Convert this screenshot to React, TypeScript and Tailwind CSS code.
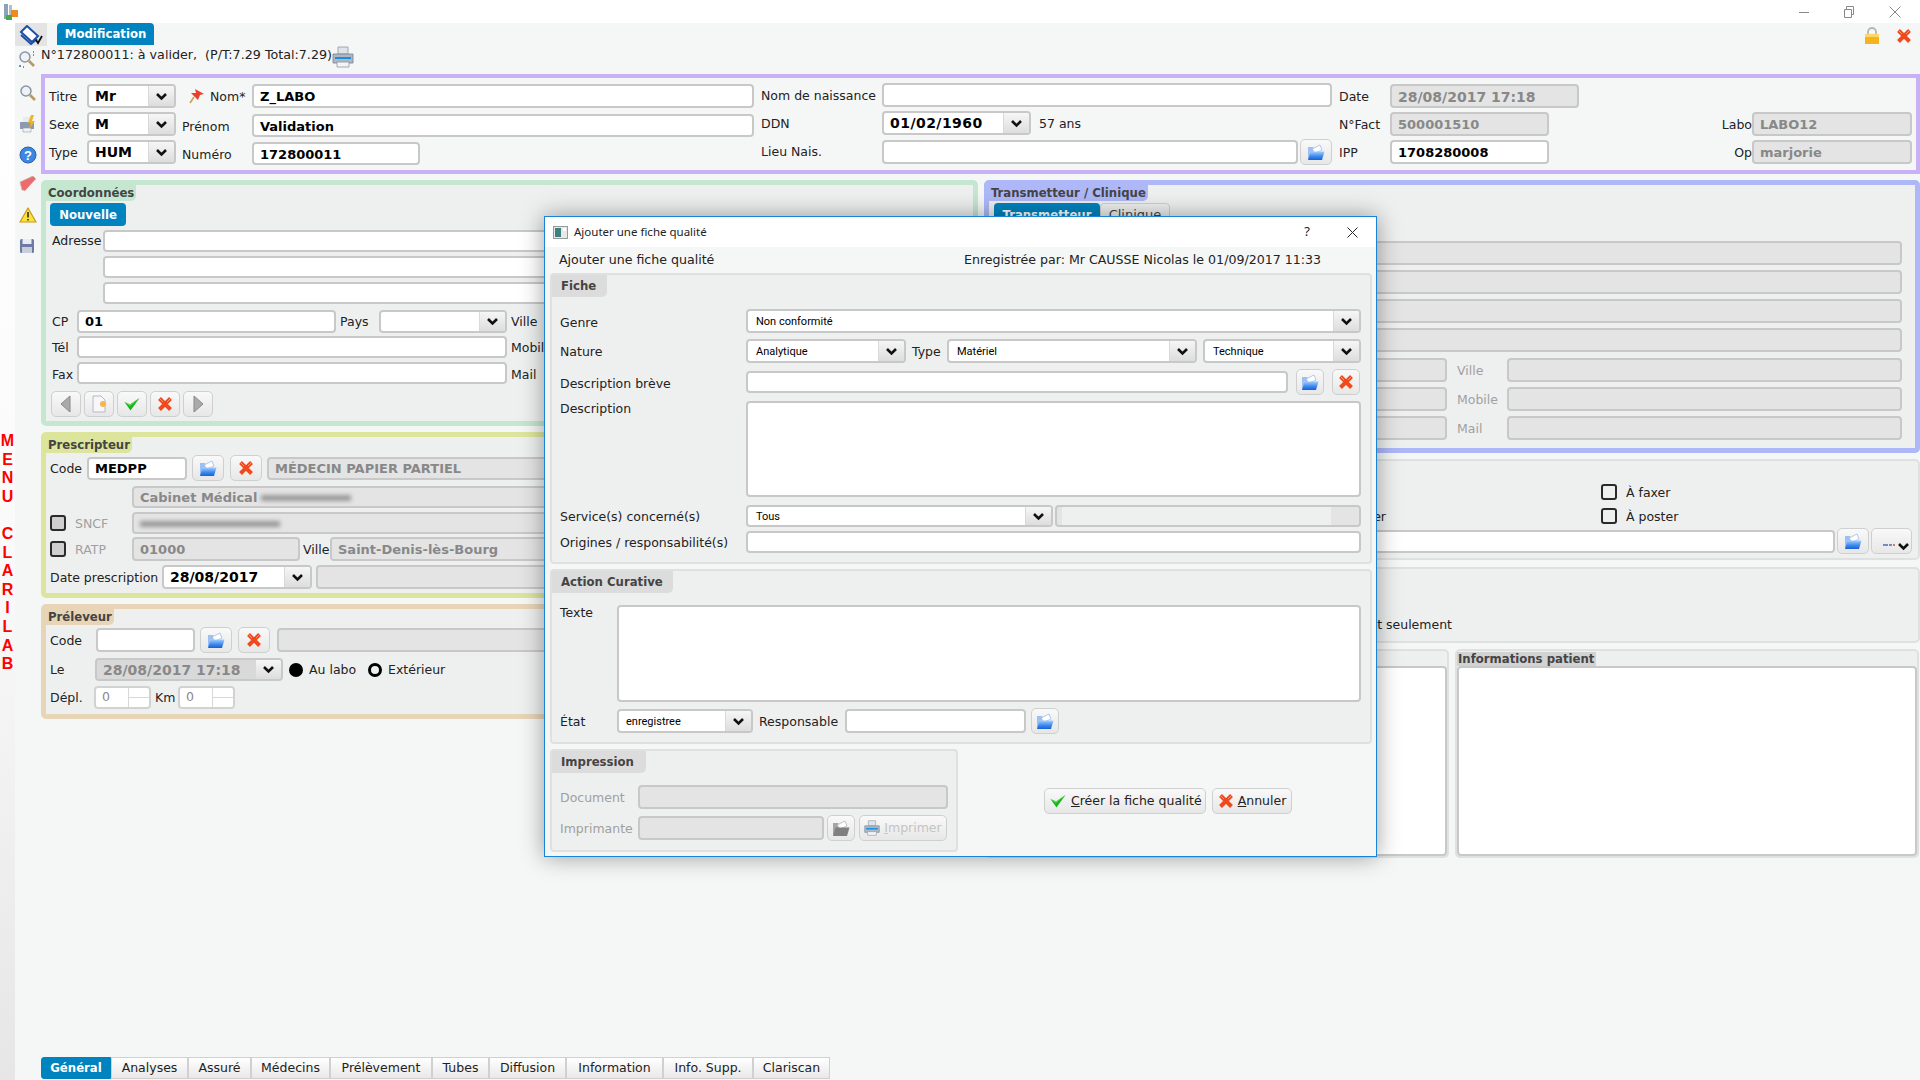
import type { ReactNode } from "react";

const SANS = "font-['DejaVu_Sans',sans-serif]";
const BOLD = "font-['DejaVu_Sans_Condensed','DejaVu_Sans',sans-serif] font-bold";
const COMBO = "font-['Roboto',sans-serif] text-[11px] font-normal";

const TABS = [
  { label: "Général", w: "w-[70px]", active: true },
  { label: "Analyses", w: "w-[77px]" },
  { label: "Assuré", w: "w-[63px]" },
  { label: "Médecins", w: "w-[79px]" },
  { label: "Prélèvement", w: "w-[102px]" },
  { label: "Tubes", w: "w-[57px]" },
  { label: "Diffusion", w: "w-[77px]" },
  { label: "Information", w: "w-[97px]" },
  { label: "Info. Supp.", w: "w-[90px]" },
  { label: "Clariscan", w: "w-[77px]" },
];

function Chevron() {
  return (
    <svg width="13" height="9" viewBox="0 0 13 9">
      <path d="M2 2 L6.5 6.5 L11 2" fill="none" stroke="#111" strokeWidth="2.6" />
    </svg>
  );
}

function FolderIcon({ muted }: { muted?: boolean }) {
  return (
    <svg width="18" height="17" viewBox="0 0 18 17">
      <defs>
        <linearGradient id="folderFront" x1="0" y1="0" x2="0" y2="1">
          <stop offset="0" stopColor="#a6cdfb" />
          <stop offset="0.55" stopColor="#3d8cf0" />
          <stop offset="1" stopColor="#1a5fd6" />
        </linearGradient>
      </defs>
      <path d="M1 3 H6 L7 5 H10 V15 H1 Z" fill={muted ? "#a5a5a5" : "#9cc0f2"} />
      <path d="M5 5 L13 1 L15 6 L8 9 Z" fill="#fff" stroke={muted ? "#aaa" : "#8fb3ea"} strokeWidth="0.7" />
      <path d="M3.5 7.5 H17.5 L15 16 H1 Z" fill={muted ? "#808080" : "url(#folderFront)"} />
    </svg>
  );
}

function RedX({ size = 16 }: { size?: number }) {
  return (
    <svg width={size} height={size} viewBox="0 0 16 16">
      <path d="M2.5 2.5 L13.5 13.5 M13.5 2.5 L2.5 13.5" stroke="#f0491e" strokeWidth="4" />
      <path d="M2 2 L6 6 M14 2 L10 6" stroke="#ff9a78" strokeWidth="1" />
    </svg>
  );
}

function GreenCheck({ size = 16 }: { size?: number }) {
  return (
    <svg width={size} height={size} viewBox="0 0 16 16">
      <path d="M0.5 6 L6 8.5 L15.5 2 L6.5 14.5 Z" fill="#17b61d" />
      <path d="M0.5 6 L6 8.5 L15.5 2 L6 10 Z" fill="#5fe04c" />
    </svg>
  );
}

function PrinterIcon({ w = 22, h = 22 }: { w?: number; h?: number }) {
  return (
    <svg width={w} height={h} viewBox="0 0 22 22">
      <path d="M6 1 H16 V8 H6 Z" fill="#dfe4ea" stroke="#8b97a5" strokeWidth="0.8" />
      <path d="M1 8 H21 V17 H1 Z" fill="#aeb7c2" stroke="#78828e" strokeWidth="0.8" />
      <path d="M3 11 H19 V13 H3 Z" fill="#1c8ee0" />
      <path d="M5 16 H17 V21 H5 Z" fill="#f4f4f4" stroke="#8b97a5" strokeWidth="0.8" />
    </svg>
  );
}

function MagnifierIcon({ dots }: { dots?: boolean }) {
  return (
    <svg width="18" height="18" viewBox="0 0 18 18">
      <circle cx="7" cy="7" r="5" fill="#eef2f6" stroke="#8b95a3" strokeWidth="1.5" />
      <path d="M11 11 L16 16" stroke="#b59a62" strokeWidth="2.6" />
      {dots && <path d="M1 16 H3 M5 17 H6 M15 2 H16 M15 5 H16" stroke="#3c6bb0" strokeWidth="1.4" />}
    </svg>
  );
}

function SideIcon({ kind }: { kind: string }) {
  if (kind === "search") return <MagnifierIcon />;
  if (kind === "print")
    return (
      <svg width="18" height="18" viewBox="0 0 18 18">
        <path d="M1 7 H15 V14 H1 Z" fill="#8b9ab0" />
        <path d="M4 2 H11 V7 H4 Z" fill="#e8ecf0" />
        <path d="M4 13 H12 V17 H4 Z" fill="#f2f2f2" stroke="#8b9ab0" strokeWidth="0.6" />
        <path d="M12 0 L9 8 H12 L10 14 L16 6 H13 L15 0 Z" fill="#f0b321" />
      </svg>
    );
  if (kind === "help")
    return (
      <svg width="18" height="18" viewBox="0 0 18 18">
        <circle cx="9" cy="9" r="8" fill="#3d87e2" stroke="#2a5fae" strokeWidth="1" />
        <text x="9" y="13.5" textAnchor="middle" fontSize="13" fontWeight="700" fill="#fff" fontFamily="'Liberation Sans', sans-serif">?</text>
      </svg>
    );
  if (kind === "book")
    return (
      <svg width="18" height="16" viewBox="0 0 18 16">
        <path d="M1 6 L14 0 L17 3 L6 15 L3 14 Z" fill="#ef6a6a" stroke="#c9b4b4" strokeWidth="0.8" />
        <path d="M3 14 L6 15 L17 3 L16.5 6 L6 16 Z" fill="#f6f0f0" />
      </svg>
    );
  if (kind === "warning")
    return (
      <svg width="18" height="16" viewBox="0 0 18 16">
        <path d="M9 1 L17 15 H1 Z" fill="#ffe13b" stroke="#c79a16" strokeWidth="1.2" strokeLinejoin="round" />
        <path d="M9 5 V10.5 M9 12 V13.5" stroke="#222" strokeWidth="1.5" />
      </svg>
    );
  return (
    <svg width="16" height="16" viewBox="0 0 16 16">
      <rect x="1" y="1" width="14" height="14" rx="1.5" fill="#6d7aa3" />
      <rect x="3.5" y="1" width="9" height="5" fill="#e9ecf4" />
      <rect x="3" y="9" width="10" height="6" fill="#c8cede" />
    </svg>
  );
}

function Field({ className, value, disabled, children }: { className?: string; value?: string; disabled?: boolean; children?: ReactNode }) {
  return (
    <div
      className={`flex items-center overflow-hidden whitespace-nowrap rounded-[4px] border-2 border-[#c8c8c8] pl-[6px] pt-[2px] text-[13px] font-bold ${
        disabled ? "bg-[#e4e4e4] text-[#888]" : "bg-white text-black"
      } ${className ?? ""}`}
    >
      {value}
      {children}
    </div>
  );
}

function Select({ className, value, combo, disabled, valueClass }: { className?: string; value?: string; combo?: boolean; disabled?: boolean; valueClass?: string }) {
  return (
    <div className={`flex overflow-hidden rounded-[4px] border-2 border-[#c8c8c8] text-black ${disabled ? "bg-[#d9d9d9]" : "bg-white"} ${className ?? ""}`}>
      <div className={`flex flex-1 items-center whitespace-nowrap ${combo ? `pl-[8px] pt-[3px] ${COMBO}` : "pl-[6px] pt-[1px] text-[14px] font-bold"} ${disabled ? "text-[#888]" : ""} ${valueClass ?? ""}`}>{value}</div>
      <div className="flex w-[26px] items-center justify-center border-l border-[#d9d9d9] bg-gradient-to-b from-[#f6f6f6] to-[#dddddd]">
        <Chevron />
      </div>
    </div>
  );
}

function IconButton({ className, children }: { className?: string; children: ReactNode }) {
  return (
    <div className={`flex h-[26px] shrink-0 items-center justify-center rounded-[5px] border border-[#cfcfcf] bg-gradient-to-b from-[#f9f9f9] to-[#e7e7e7] ${className ?? ""}`}>
      {children}
    </div>
  );
}

function Label({ className, children, muted }: { className?: string; children: ReactNode; muted?: boolean }) {
  return <div className={`shrink-0 whitespace-nowrap pt-[2px] text-[12.5px] ${muted ? "text-[#a0a0a0]" : "text-[#222]"} ${className ?? ""}`}>{children}</div>;
}

function Checkbox({ disabled }: { disabled?: boolean }) {
  return <div className={`h-[16px] w-[16px] shrink-0 rounded-[3px] border-2 border-[#2a2a2a] ${disabled ? "bg-[#cfcfcf]" : ""}`} />;
}

function Spin({ className }: { className?: string }) {
  return (
    <div className={`flex h-[23px] overflow-hidden rounded-[4px] border-2 border-[#d2d2d2] bg-white text-[12.5px] text-[#888] ${className ?? ""}`}>
      <div className="flex flex-1 items-center pl-[6px]">0</div>
      <div className="flex w-[21px] flex-col border-l border-[#d8d8d8]">
        <div className="h-1/2 border-b border-[#d8d8d8]" />
      </div>
    </div>
  );
}

function Legend({ className, children }: { className?: string; children: ReactNode }) {
  return <div className={`w-fit whitespace-nowrap rounded-br-[5px] px-[2px] text-[13px] leading-[16px] text-[#444] ${BOLD} ${className ?? ""}`}>{children}</div>;
}

function BlurBar({ className }: { className?: string }) {
  return <div className={`h-[6px] bg-[#999] blur-[2px] ${className ?? ""}`} />;
}

function ModalLegend({ className, children }: { className?: string; children: ReactNode }) {
  return <div className={`flex h-[22px] items-center whitespace-nowrap rounded-br-[5px] bg-[#dcdcdc] pl-[9px] text-[13px] text-[#444] ${BOLD} ${className ?? ""}`}>{children}</div>;
}

function PurplePanel() {
  return (
    <div className="flex h-[100px] shrink-0 border-4 border-[#c9b1f8] pl-[4px]">
      <div className="flex w-[705px] flex-col pt-[6px]">
        <div className="flex h-[28px] items-start">
          <Label className="h-[24px] w-[38px] leading-[22px]">Titre</Label>
          <Select className="h-[24px] w-[89px]" value="Mr" />
          <div className="ml-[13px] flex h-[24px] w-[21px] items-center">
            <svg width="16" height="16" viewBox="0 0 16 16">
              <path d="M6 1 L15 6 L11 7 L9 12 L2 5 L7 5 Z" fill="#e8402c" />
              <path d="M5 9 L1 15" stroke="#d0a050" strokeWidth="1.6" />
            </svg>
          </div>
          <Label className="h-[24px] w-[42px] leading-[22px]">Nom*</Label>
          <Field className="h-[24px] flex-1" value="Z_LABO" />
        </div>
        <div className="flex h-[28px] items-start">
          <Label className="h-[24px] w-[38px] leading-[22px]">Sexe</Label>
          <Select className="h-[24px] w-[89px]" value="M" />
          <Label className="ml-[6px] mt-[2px] w-[70px] leading-[22px]">Prénom</Label>
          <Field className="mt-[2px] h-[23px] flex-1" value="Validation" />
        </div>
        <div className="flex h-[28px] items-start">
          <Label className="h-[24px] w-[38px] leading-[22px]">Type</Label>
          <Select className="h-[24px] w-[89px]" value="HUM" />
          <Label className="ml-[6px] mt-[2px] w-[70px] leading-[22px]">Numéro</Label>
          <Field className="mt-[2px] h-[23px] w-[168px]" value="172800011" />
        </div>
      </div>
      <div className="ml-[7px] flex w-[571px] flex-col pt-[5px]">
        <div className="flex h-[28px] items-start">
          <Label className="h-[24px] w-[121px] leading-[22px]">Nom de naissance</Label>
          <Field className="h-[24px] flex-1" />
        </div>
        <div className="flex h-[28px] items-start">
          <Label className="h-[24px] w-[121px] leading-[22px]">DDN</Label>
          <Select className="h-[24px] w-[149px]" value="01/02/1960" valueClass="tracking-[0.45px]" />
          <Label className="ml-[8px] h-[24px] leading-[22px]">57 ans</Label>
        </div>
        <div className="flex h-[28px] items-start">
          <Label className="h-[24px] w-[121px] leading-[22px]">Lieu Nais.</Label>
          <Field className="mt-[1px] h-[24px] w-[416px]" />
          <IconButton className="ml-[2px] w-[32px]">
            <FolderIcon />
          </IconButton>
        </div>
      </div>
      <div className="ml-[7px] flex w-[573px] flex-col pt-[6px]">
        <div className="flex h-[28px] items-start">
          <Label className="h-[24px] w-[51px] leading-[22px]">Date</Label>
          <Field className="h-[24px] w-[189px] text-[14px]" disabled value="28/08/2017 17:18" />
        </div>
        <div className="flex h-[28px] items-start">
          <Label className="h-[24px] w-[51px] leading-[22px]">N°Fact</Label>
          <Field className="h-[24px] w-[159px]" disabled value="500001510" />
          <Label className="h-[24px] w-[203px] text-right leading-[22px]">Labo</Label>
          <Field className="h-[24px] w-[160px]" disabled value="LABO12" />
        </div>
        <div className="flex h-[28px] items-start">
          <Label className="h-[24px] w-[51px] leading-[22px]">IPP</Label>
          <Field className="h-[24px] w-[159px]" value="1708280008" />
          <Label className="h-[24px] w-[203px] text-right leading-[22px]">Op</Label>
          <Field className="h-[24px] w-[160px]" disabled value="marjorie" />
        </div>
      </div>
    </div>
  );
}

function Coordonnees() {
  return (
    <div className="h-[246px] shrink-0 rounded-[5px] border-[5px] border-[#c5e6cf] bg-[#eef0f0]">
      <Legend className="bg-[#c5e6cf]">Coordonnées</Legend>
      <div className={`ml-[4px] mt-[2px] flex h-[23px] w-[76px] items-center justify-center rounded-[4px] bg-[#0083bf] text-[13px] text-white ${BOLD}`}>Nouvelle</div>
      <div className="ml-[6px] mr-[5px] mt-[4px] flex flex-col">
        <div className="flex h-[22px] items-start">
          <Label className="w-[51px] leading-[18px]">Adresse</Label>
          <Field className="h-[22px] flex-1" />
        </div>
        <Field className="ml-[51px] mt-[4px] h-[22px]" />
        <Field className="ml-[51px] mt-[4px] h-[22px]" />
        <div className="ml-0 mt-[6px] flex h-[23px] items-center">
          <Label className="w-[25px]">CP</Label>
          <Field className="h-[23px] w-[259px] !pt-[0px]" value="01" />
          <Label className="ml-[4px] w-[39px]">Pays</Label>
          <Select className="h-[23px] w-[128px]" />
          <Label className="ml-[4px] w-[58px]">Ville</Label>
          <Field className="h-[23px] flex-1" />
        </div>
        <div className="mt-[3px] flex h-[22px] items-center">
          <Label className="w-[25px]">Tél</Label>
          <Field className="h-[22px] w-[430px]" />
          <Label className="ml-[4px] w-[58px]">Mobile</Label>
          <Field className="h-[22px] flex-1" />
        </div>
        <div className="mt-[4px] flex h-[22px] items-center">
          <Label className="w-[25px] !pt-[4px]">Fax</Label>
          <Field className="h-[22px] w-[430px]" />
          <Label className="ml-[4px] w-[58px] !pt-[4px]">Mail</Label>
          <Field className="h-[22px] flex-1" />
        </div>
        <div className="-ml-[1px] mt-[7px] flex gap-[3px]">
          <IconButton className="w-[30px]">
            <svg width="12" height="18" viewBox="0 0 12 18">
              <path d="M10 1 V17 L1 9 Z" fill="#aaa" stroke="#888" strokeWidth="1" />
            </svg>
          </IconButton>
          <IconButton className="w-[30px]">
            <svg width="15" height="18" viewBox="0 0 15 18">
              <path d="M1 1 H9 L13 5 V17 H1 Z" fill="#f6f6fb" stroke="#b8b8c8" strokeWidth="1" />
              <circle cx="11" cy="9" r="3" fill="#f4b84a" />
            </svg>
          </IconButton>
          <IconButton className="w-[30px]">
            <GreenCheck />
          </IconButton>
          <IconButton className="w-[30px]">
            <RedX />
          </IconButton>
          <IconButton className="w-[30px]">
            <svg width="12" height="18" viewBox="0 0 12 18">
              <path d="M2 1 V17 L11 9 Z" fill="#aaa" stroke="#888" strokeWidth="1" />
            </svg>
          </IconButton>
        </div>
      </div>
    </div>
  );
}

function Prescripteur() {
  return (
    <div className="mt-[6px] h-[166px] shrink-0 rounded-[5px] border-[5px] border-[#dde59c] bg-[#eef0f0]">
      <Legend className="bg-[#dde59c]">Prescripteur</Legend>
      <div className="ml-[4px] mr-[5px] mt-[2px] flex flex-col">
        <div className="flex h-[26px] items-center">
          <Label className="w-[37px]">Code</Label>
          <Field className="h-[23px] w-[100px]" value="MEDPP" />
          <IconButton className="ml-[5px] w-[32px]">
            <FolderIcon />
          </IconButton>
          <IconButton className="ml-[6px] w-[32px]">
            <RedX />
          </IconButton>
          <Field className="ml-[5px] h-[23px] flex-1" disabled value="MÉDECIN PAPIER PARTIEL" />
        </div>
        <div className="ml-[82px] mt-[5px]">
          <Field className="h-[22px]" disabled value="Cabinet Médical">
            <BlurBar className="ml-[4px] w-[90px]" />
          </Field>
        </div>
        <div className="mt-[4px] flex h-[22px] items-center">
          <Checkbox disabled />
          <Label className="ml-[9px] w-[57px]" muted>SNCF</Label>
          <Field className="h-[22px] flex-1" disabled>
            <BlurBar className="w-[140px]" />
          </Field>
        </div>
        <div className="mt-[3px] flex h-[24px] items-center">
          <Checkbox disabled />
          <Label className="ml-[9px] w-[57px]" muted>RATP</Label>
          <Field className="h-[24px] w-[168px]" disabled value="01000" />
          <Label className="ml-[3px] w-[27px]">Ville</Label>
          <Field className="h-[24px] flex-1" disabled value="Saint-Denis-lès-Bourg" />
        </div>
        <div className="mt-[4px] flex h-[24px] items-center">
          <Label className="w-[112px]">Date prescription</Label>
          <Select className="h-[24px] w-[150px]" value="28/08/2017" />
          <Field className="ml-[4px] h-[24px] flex-1" disabled />
        </div>
      </div>
    </div>
  );
}

function Preleveur() {
  return (
    <div className="mt-[6px] h-[115px] shrink-0 rounded-[5px] border-[5px] border-[#e8d5b7] bg-[#eef0f0]">
      <Legend className="bg-[#e8d5b7]">Préleveur</Legend>
      <div className="ml-[4px] mr-[5px] mt-[2px] flex flex-col">
        <div className="flex h-[26px] items-center">
          <Label className="w-[46px]">Code</Label>
          <Field className="h-[24px] w-[99px]" />
          <IconButton className="ml-[5px] w-[32px]">
            <FolderIcon />
          </IconButton>
          <IconButton className="ml-[6px] w-[32px]">
            <RedX />
          </IconButton>
          <Field className="ml-[7px] h-[24px] flex-1" disabled />
        </div>
        <div className="mt-[5px] flex h-[23px] items-center">
          <Label className="w-[45px]">Le</Label>
          <Select className="h-[23px] w-[188px]" disabled value="28/08/2017 17:18" />
          <div className="ml-[6px] h-[14px] w-[14px] rounded-full bg-black" />
          <Label className="ml-[6px] w-[59px]">Au labo</Label>
          <div className="h-[14px] w-[14px] rounded-full border-[3px] border-black" />
          <Label className="ml-[6px]">Extérieur</Label>
        </div>
        <div className="mt-[5px] flex h-[23px] items-center">
          <Label className="w-[44px]">Dépl.</Label>
          <Spin className="w-[57px]" />
          <Label className="ml-[4px] w-[23px]">Km</Label>
          <Spin className="w-[57px]" />
        </div>
      </div>
    </div>
  );
}

function Transmetteur() {
  return (
    <div className="h-[273px] shrink-0 rounded-[5px] border-[5px] border-[#aeb8f8] bg-[#eef0f0]">
      <Legend className="bg-[#aeb8f8]">Transmetteur / Clinique</Legend>
      <div className="ml-[5px] mt-[2px] flex h-[23px] text-[13px]">
        <div className={`flex w-[106px] items-center justify-center rounded-t-[4px] bg-[#0083bf] text-white ${BOLD}`}>Transmetteur</div>
        <div className="flex w-[70px] items-center justify-center rounded-t-[4px] border border-[#cfcfcf] text-[#444]">Clinique</div>
      </div>
      <div className="ml-[10px] mr-[13px] mt-[15px] flex flex-col gap-[5px]">
        <Field className="h-[24px]" disabled />
        <Field className="h-[24px]" disabled />
        <Field className="h-[24px]" disabled />
        <Field className="h-[24px]" disabled />
        <div className="mt-[1px] flex flex-col gap-[5px]">
          {["Ville", "Mobile", "Mail"].map(l => (
            <div key={l} className="flex h-[24px] items-center">
              <Field className="h-[24px] w-[448px]" disabled />
              <Label className="ml-[10px] w-[50px]" muted>{l}</Label>
              <Field className="h-[24px] flex-1" disabled />
            </div>
          ))}
        </div>
      </div>
    </div>
  );
}

function Diffusion() {
  return (
    <div className="mt-[6px] h-[101px] shrink-0 rounded-[5px] border-2 border-[#dfe1e1] bg-[#eef0f0] pt-[23px]">
      <div className="flex h-[16px] items-center pl-[615px]">
        <Checkbox />
        <Label className="ml-[9px]">À faxer</Label>
      </div>
      <div className="mt-[8px] flex h-[16px] items-center">
        <Label className="w-[400px] text-right">À envoyer</Label>
        <div className="w-[215px]" />
        <Checkbox />
        <Label className="ml-[9px]">À poster</Label>
      </div>
      <div className="mt-[4px] flex h-[26px] items-center pl-[10px]">
        <Field className="h-[23px] w-[839px]" />
        <IconButton className="ml-[2px] w-[32px]">
          <FolderIcon />
        </IconButton>
        <IconButton className="ml-[2px] w-[41px] !items-end !justify-end pb-[2px] pr-[1px]">
          <svg className="mb-[4px]" width="14" height="4" viewBox="0 0 14 4">
            <path d="M0 2 H5 M6 2 H9" stroke="#4a6fb0" strokeWidth="1.4" />
            <path d="M10 2 H12" stroke="#d05050" strokeWidth="1.4" />
          </svg>
          <Chevron />
        </IconButton>
      </div>
    </div>
  );
}

function RightColumn() {
  return (
    <div className="flex w-[936px] flex-col">
      <Transmetteur />
      <Diffusion />
      <div className="mt-[7px] flex h-[76px] shrink-0 flex-col rounded-[5px] border-2 border-[#dfe1e1] bg-[#eef0f0] pt-[45px]">
        <Label className="w-[466px] text-right">Patient seulement</Label>
      </div>
      <div className="mt-[6px] flex h-[209px] shrink-0 gap-[6px]">
        <div className="flex w-[465px] flex-col rounded-[5px] border-2 border-[#dfe1e1] bg-[#eef0f0]">
          <div className="h-[15px]" />
          <div className="flex-1 rounded-[4px] border-2 border-[#c8c8c8] bg-white" />
        </div>
        <div className="flex w-[464px] flex-col rounded-[5px] border-2 border-[#dfe1e1] bg-[#eef0f0]">
          <div className={`mt-[1px] w-fit whitespace-nowrap bg-[#d2d2d2] pl-[1px] pr-[2px] text-[13px] leading-[14px] text-[#444] ${BOLD}`}>Informations patient</div>
          <div className="flex-1 rounded-[4px] border-2 border-[#c8c8c8] bg-white" />
        </div>
      </div>
    </div>
  );
}

function FicheQualite() {
  return (
    <div className={`absolute left-[544px] top-[216px] flex h-[641px] w-[833px] flex-col border border-[#1883d7] bg-[#f5f7f7] shadow-[0_0_22px_rgba(0,0,0,0.38)] ${SANS}`}>
      <div className="flex h-[30px] shrink-0 items-center bg-white pl-[8px] pr-[18px] font-['Noto_Sans',sans-serif] text-[11.5px] text-[#222]">
        <svg width="15" height="13" viewBox="0 0 15 13">
          <rect x="0.5" y="0.5" width="14" height="12" fill="#e8e8e8" stroke="#999" />
          <rect x="2" y="2" width="6" height="9" fill="#3f7f7f" />
          <rect x="10" y="2" width="3" height="3" fill="#fff" />
        </svg>
        <span className="ml-[6px]">Ajouter une fiche qualité</span>
        <span className="ml-auto text-[13px]">?</span>
        <svg className="ml-[37px]" width="11" height="11" viewBox="0 0 11 11">
          <path d="M0.5 0.5 L10.5 10.5 M10.5 0.5 L0.5 10.5" stroke="#222" strokeWidth="1" />
        </svg>
      </div>
      <div className="flex h-[26px] shrink-0 items-center justify-between pl-[14px] pr-[55px] text-[12.6px] text-[#222]">
        <span>Ajouter une fiche qualité</span>
        <span>Enregistrée par: Mr CAUSSE Nicolas le 01/09/2017 11:33</span>
      </div>
      <div className="ml-[5px] flex h-[291px] w-[822px] shrink-0 flex-col rounded-[4px] border-2 border-[#dfe1e1] bg-[#eef0f0]">
        <ModalLegend className="w-[55px]">Fiche</ModalLegend>
        <div className="ml-[8px] mr-[9px] mt-[12px] flex flex-col">
          <div className="flex h-[24px] items-center">
            <Label className="w-[186px] !pt-[4px]">Genre</Label>
            <Select className="h-[24px] flex-1" combo value="Non conformité" />
          </div>
          <div className="mt-[6px] flex h-[24px] items-center">
            <Label className="w-[186px]">Nature</Label>
            <Select className="h-[24px] w-[160px]" combo value="Analytique" />
            <Label className="ml-[6px] w-[35px]">Type</Label>
            <Select className="h-[24px] w-[250px]" combo value="Matériel" />
            <Select className="ml-[6px] h-[24px] flex-1" combo value="Technique" />
          </div>
          <div className="mt-[6px] flex h-[26px] items-center">
            <Label className="w-[186px] !pt-[4px]">Description brève</Label>
            <Field className="h-[22px] flex-1" />
            <IconButton className="ml-[8px] w-[28px]">
              <FolderIcon />
            </IconButton>
            <IconButton className="ml-[8px] mr-[1px] w-[28px]">
              <RedX />
            </IconButton>
          </div>
          <div className="mt-[6px] flex h-[96px] items-start">
            <Label className="w-[186px] leading-[12px]">Description</Label>
            <Field className="h-[96px] flex-1" />
          </div>
          <div className="mt-[8px] flex h-[22px] items-center">
            <Label className="w-[186px]">Service(s) concerné(s)</Label>
            <Select className="h-[22px] w-[307px]" combo value="Tous" />
            <div className="ml-[2px] flex h-[22px] flex-1 overflow-hidden rounded-[4px] border-2 border-[#c8c8c8] bg-[#e4e4e4]">
              <div className="ml-[5px] mr-[28px] flex-1 bg-[#eef0f0]" />
            </div>
          </div>
          <div className="mt-[4px] flex h-[22px] items-center">
            <Label className="w-[186px]">Origines / responsabilité(s)</Label>
            <Field className="h-[22px] flex-1" />
          </div>
        </div>
      </div>
      <div className="ml-[5px] mt-[5px] flex h-[175px] w-[822px] shrink-0 flex-col rounded-[4px] border-2 border-[#dfe1e1] bg-[#eef0f0]">
        <ModalLegend className="w-[121px]">Action Curative</ModalLegend>
        <div className="ml-[8px] mr-[9px] mt-[12px] flex h-[97px] items-start">
          <Label className="w-[57px] leading-[12px]">Texte</Label>
          <Field className="h-[97px] flex-1" />
        </div>
        <div className="ml-[8px] mt-[6px] flex h-[26px] items-center">
          <Label className="w-[57px]">État</Label>
          <Select className="h-[24px] w-[136px]" combo value="enregistree" valueClass="!pl-[7px]" />
          <Label className="ml-[6px] w-[86px]">Responsable</Label>
          <Field className="h-[24px] w-[181px]" />
          <IconButton className="ml-[5px] w-[28px]">
            <FolderIcon />
          </IconButton>
        </div>
      </div>
      <div className="ml-[5px] mt-[5px] flex h-[103px] shrink-0 items-center">
        <div className="flex h-[103px] w-[408px] shrink-0 flex-col rounded-[4px] border-2 border-[#dfe1e1] bg-[#eef0f0]">
          <ModalLegend className="w-[94px]">Impression</ModalLegend>
          <div className="ml-[8px] mt-[12px] flex h-[24px] items-center">
            <Label className="w-[78px]" muted>Document</Label>
            <Field className="h-[24px] w-[310px]" disabled />
          </div>
          <div className="ml-[8px] mt-[6px] flex h-[26px] items-center">
            <Label className="w-[78px]" muted>Imprimante</Label>
            <Field className="h-[24px] w-[186px]" disabled />
            <IconButton className="ml-[3px] w-[28px]">
              <FolderIcon muted />
            </IconButton>
            <IconButton className="ml-[4px] w-[88px] gap-[4px] text-[12.5px] text-[#c4c4c4]">
              <PrinterIcon w={16} h={16} />
              <span><span className="underline">I</span>mprimer</span>
            </IconButton>
          </div>
        </div>
        <IconButton className="ml-[86px] w-[162px] !justify-start gap-[5px] pl-[5px] text-[12.5px] text-[#222]">
          <GreenCheck />
          <span className="pt-[2px]"><span className="underline">C</span>réer la fiche qualité</span>
        </IconButton>
        <IconButton className="ml-[6px] w-[80px] gap-[4px] text-[12.5px] text-[#222]">
          <RedX />
          <span className="pt-[2px]"><span className="underline">A</span>nnuler</span>
        </IconButton>
      </div>
    </div>
  );
}

export default function App() {
  return (
    <div className={`relative flex h-[1080px] w-[1920px] flex-col overflow-hidden bg-[#f5f7f7] ${SANS}`}>
      {/* window title bar */}
      <div className="flex h-[23px] shrink-0 items-center bg-white pl-[3px]">
        <svg width="16" height="16" viewBox="0 0 16 16">
          <rect x="1" y="0" width="4" height="15" fill="#8aa3b8" />
          <rect x="6" y="1" width="3" height="12" fill="#b0bec8" />
          <rect x="8" y="6" width="7" height="7" fill="#f08a1c" />
          <rect x="3" y="11" width="6" height="5" fill="#4aa84a" />
        </svg>
        <svg className="ml-auto" width="12" height="12" viewBox="0 0 12 12">
          <path d="M1 6.5 H11" stroke="#888" strokeWidth="1" />
        </svg>
        <svg className="ml-[33px]" width="12" height="12" viewBox="0 0 12 12">
          <path d="M1.5 3.5 H8.5 V11.5 H1.5 Z M3.5 3.5 V0.5 H10.5 V8.5 H8.5" fill="none" stroke="#888" strokeWidth="1" />
        </svg>
        <svg className="ml-[34px] mr-[19px]" width="12" height="12" viewBox="0 0 12 12">
          <path d="M0.5 0.5 L11.5 11.5 M11.5 0.5 L0.5 11.5" stroke="#888" strokeWidth="1" />
        </svg>
      </div>

      <div className="flex min-h-0 flex-1">
        {/* red vertical menu */}
        <div className="flex w-[15px] shrink-0 flex-col items-center bg-gradient-to-b from-white via-[#fafafa] to-[#e6e6e6] pt-[409px] font-['Liberation_Sans',sans-serif] text-[16px] font-bold leading-[18.6px] text-[#f00]">
          {"MENU CLARILAB".split("").map((c, i) => (
            <div key={i} className="h-[18.6px]">{c === " " ? "\u00a0" : c}</div>
          ))}
        </div>

        <div className="flex min-w-0 flex-1 flex-col">
          <div className="flex h-[23px] shrink-0 items-start">
            <div className="flex h-[23px] w-[32px] items-center justify-center bg-[#e4e4e4]">
              <svg width="24" height="20" viewBox="0 0 24 20">
                <path d="M2 7 L8 1 L19 11 L13 17 Z" fill="#fff" stroke="#1e4fa8" strokeWidth="2" />
                <path d="M2 10 L12 19 L18 14" fill="none" stroke="#1e4fa8" strokeWidth="2" />
                <path d="M17 15 L19 18 L23 11" fill="none" stroke="#111" strokeWidth="1.8" />
              </svg>
            </div>
            <div className={`ml-[10px] flex h-[22px] w-[97px] items-center justify-center rounded-t-[4px] bg-[#0083bf] text-[13px] text-white ${BOLD}`}>Modification</div>
            <div className="ml-auto mr-[8px] mt-[4px] flex items-center gap-[16px]">
              <svg width="16" height="17" viewBox="0 0 16 17">
                <path d="M4 8 V5 A4 4 0 0 1 12 5 V8" fill="none" stroke="#b5b5b5" strokeWidth="1.8" />
                <rect x="1" y="7" width="14" height="10" fill="#f4b41a" />
                <rect x="1" y="7" width="14" height="3" fill="#fbd768" />
              </svg>
              <RedX />
            </div>
          </div>
          <div className="flex h-[28px] shrink-0 items-start">
            <div className="ml-[3px] mt-[4px] w-[23px]">
              <MagnifierIcon dots />
            </div>
            <div className="flex items-start text-[12.7px] leading-[16px] text-[#222]">
              <span className="mt-[1px] whitespace-pre">N°172800011: à valider,  (P/T:7.29 Total:7.29)</span>
              <PrinterIcon />
            </div>
          </div>

          <div className="flex min-h-0 flex-1">
            <div className="flex w-[26px] shrink-0 flex-col gap-[14.8px] pl-[4px] pt-[10px]">
              {["search", "print", "help", "book", "warning", "save"].map(k => (
                <div key={k} className="h-[16px]">
                  <SideIcon kind={k} />
                </div>
              ))}
            </div>

            <div className="flex w-[1879px] shrink-0 flex-col">
              <PurplePanel />
              <div className="mt-[6px] flex gap-[6px]">
                <div className="flex w-[937px] flex-col">
                  <Coordonnees />
                  <Prescripteur />
                  <Preleveur />
                </div>
                <RightColumn />
              </div>
              <div className="mb-[1px] mt-auto flex h-[22px] shrink-0 text-[12.5px]">
                {TABS.map(t => (
                  <div
                    key={t.label}
                    className={`flex items-center justify-center border ${t.w} ${
                      t.active
                        ? `rounded-l-[3px] border-[#0083bf] bg-[#0083bf] text-white ${BOLD} text-[13px]`
                        : "border-[#d0d0d0] bg-gradient-to-b from-white to-[#e8e8e8] text-[#222]"
                    }`}
                  >
                    {t.label}
                  </div>
                ))}
              </div>
            </div>
          </div>
        </div>
      </div>

      <FicheQualite />
    </div>
  );
}
